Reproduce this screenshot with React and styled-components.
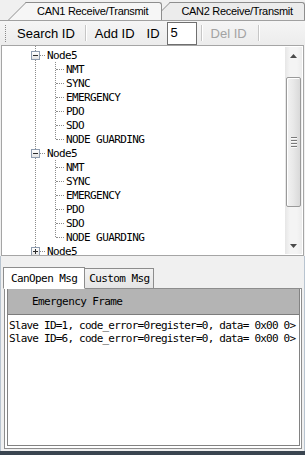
import React from "react";
import styled, { createGlobalStyle, css } from "styled-components";

const GlobalStyle = createGlobalStyle`
  html, body {
    margin: 0;
    padding: 0;
    background: #f0f0f0;
  }
  body {
    font-family: "Liberation Sans", Arial, sans-serif;
  }
`;

const mono = css`
  font-family: "DejaVu Sans Mono", "Liberation Mono", monospace;
  font-size: 11px;
  letter-spacing: -0.6px;
  color: #000;
`;

const Window = styled.div`
  width: 305px;
  height: 455px;
  display: flex;
  flex-direction: column;
  background: #f0f0f0;
  overflow: hidden;
`;

/* ---------- top tab strip ---------- */

const TabStrip = styled.div`
  height: 20px;
  display: flex;
  align-items: flex-end;
  padding-left: 8px;
  border-bottom: 1px solid #a0a0a0;
  background: #f0f0f0;
`;

const StripTab = styled.div`
  position: relative;
  z-index: ${(p) => (p.$active ? 2 : 1)};
  height: 18px;
  display: flex;
  align-items: center;
  padding: 0 0 0 29px;
  width: ${(p) => p.$width}px;
  box-sizing: border-box;
  margin-left: ${(p) => (p.$first ? 0 : -10)}px;
  font-size: 11px;
  letter-spacing: -0.3px;
  color: #000;
  white-space: nowrap;

  &::before {
    content: "";
    position: absolute;
    z-index: -1;
    left: 0;
    bottom: 0;
    width: 24px;
    height: 18px;
    box-sizing: border-box;
    background: ${(p) => (p.$active ? "#f6f6f6" : "#ececec")};
    border-left: 1px solid #8e8e8e;
    border-top: 1px solid #8e8e8e;
    transform: skewX(-45deg);
    transform-origin: bottom left;
  }

  &::after {
    content: "";
    position: absolute;
    z-index: -1;
    left: 18px;
    right: 0;
    top: 0;
    bottom: 0;
    box-sizing: border-box;
    background: ${(p) => (p.$active ? "#f6f6f6" : "#ececec")};
    border-top: 1px solid #8e8e8e;
    border-right: 1px solid #8e8e8e;
    border-top-right-radius: 3px;
  }
`;

/* ---------- toolbar ---------- */

const Toolbar = styled.div`
  height: 24px;
  display: flex;
  align-items: center;
  padding-left: 5px;
  background: linear-gradient(#f5f5f5, #ececec);
  font-size: 13px;
`;

const Grip = styled.div`
  width: 0;
  height: 17px;
  border-left: 1px dotted #8a8a8a;
  margin-right: 10px;
`;

const ToolButton = styled.span`
  color: ${(p) => (p.$disabled ? "#a3a3a3" : "#000")};
  padding: 0 1px;
  margin-right: ${(p) => p.$gap || 0}px;
`;

const Separator = styled.div`
  width: 1px;
  height: 16px;
  background: #c6c6c6;
  border-right: 1px solid #fff;
  margin: 0 ${(p) => p.$right || 7}px 0 ${(p) => p.$left || 9}px;
`;

const IdInput = styled.div`
  width: 30px;
  height: 23px;
  box-sizing: border-box;
  border: 1px solid #6f6f6f;
  background: #fff;
  padding: 2px 0 0 3px;
  font-size: 13px;
  align-self: flex-end;
`;

/* ---------- tree ---------- */

const TreePanel = styled.div`
  height: 211px;
  box-sizing: border-box;
  margin: 0 1px 0 1px;
  border: 1px solid #a5a5a5;
  background: #fff;
  display: flex;
  overflow: hidden;
`;

const TreeArea = styled.div`
  flex: 1;
  position: relative;
  padding-top: 2px;
  overflow: hidden;

  &::before {
    content: "";
    position: absolute;
    left: 33px;
    top: 0;
    bottom: 0;
    border-left: 1px dotted #8c8c8c;
  }
`;

const NodeRow = styled.div`
  height: 14px;
  display: flex;
  align-items: center;
  ${mono};
`;

const Expander = styled.div`
  position: relative;
  z-index: 1;
  width: 7px;
  height: 7px;
  margin-left: 29px;
  border: 1px solid #8f9db0;
  background: linear-gradient(#fff, #e4e4e4);
  display: flex;
  align-items: center;
  justify-content: center;

  &::before {
    content: "";
    width: 5px;
    height: 1px;
    background: #2c2c2c;
  }

  ${(p) =>
    p.$collapsed &&
    css`
      &::after {
        content: "";
        position: absolute;
        width: 1px;
        height: 5px;
        background: #2c2c2c;
      }
    `}
`;

const HLine = styled.span`
  width: ${(p) => p.$w}px;
  height: 0;
  border-top: 1px dotted #8c8c8c;
  margin-right: 2px;
`;

const Children = styled.div`
  position: relative;

  &::before {
    content: "";
    position: absolute;
    left: 53px;
    top: 0;
    bottom: 7px;
    border-left: 1px dotted #8c8c8c;
  }
`;

const ChildRow = styled.div`
  height: 14px;
  display: flex;
  align-items: center;
  padding-left: 54px;
  white-space: pre;
  ${mono};
`;

const ScrollBar = styled.div`
  width: 17px;
  margin: 1px 1px 1px 0;
  display: flex;
  flex-direction: column;
  background: linear-gradient(to right, #e6e6e6, #f4f4f4 30%, #f4f4f4 70%, #ececec);
`;

const ArrowButton = styled.div`
  height: 17px;
  display: flex;
  align-items: center;
  justify-content: center;
`;

const Track = styled.div`
  flex: 1;
  display: flex;
  flex-direction: column;
  padding: 13px 1px 0 1px;
`;

const Thumb = styled.div`
  height: 130px;
  box-sizing: border-box;
  border: 1px solid #9a9a9a;
  border-radius: 2px;
  background: linear-gradient(to right, #f2f2f2, #e8e8e8 50%, #d9d9d9);
  box-shadow: inset 1px 1px 0 #fff;
  display: flex;
  flex-direction: column;
  align-items: center;
  justify-content: center;
  gap: 1px;
`;

const GripLine = styled.div`
  width: 6px;
  height: 1px;
  background: #7a7a7a;
  border-bottom: 1px solid #fafafa;
`;

/* ---------- lower message area ---------- */

const Lower = styled.div`
  flex: 1;
  display: flex;
  flex-direction: column;
  padding: 10px 2px 2px 3px;
  border-left: 1px solid #b8c4d0;
  border-right: 1px solid #b8c4d0;
`;

const MsgTabs = styled.div`
  display: flex;
  align-items: flex-end;
  height: 22px;
  margin-left: -1px;
  position: relative;
  z-index: 1;
`;

const MsgTab = styled.div`
  ${mono};
  box-sizing: border-box;
  height: ${(p) => (p.$active ? 22 : 20)}px;
  padding: 0 ${(p) => (p.$active ? 7 : 4)}px;
  display: flex;
  align-items: center;
  border: 1px solid #8d8d8d;
  border-bottom: ${(p) => (p.$active ? "1px solid #fff" : "none")};
  border-left: ${(p) => (p.$active ? "1px solid #8d8d8d" : "none")};
  background: ${(p) => (p.$active ? "#fff" : "linear-gradient(#f2f2f2, #e5e5e5)")};
  margin-bottom: ${(p) => (p.$active ? -1 : 0)}px;
`;

const TabPage = styled.div`
  flex: 1;
  border: 1px solid #8d8d8d;
  background: #fff;
  display: flex;
  flex-direction: column;
  padding: 0 1px 2px 2px;
`;

const ListView = styled.div`
  flex: 1;
  border: 1px solid #828282;
  border-top: none;
  display: flex;
  flex-direction: column;
`;

const ListHeader = styled.div`
  ${mono};
  height: 25px;
  display: flex;
  align-items: center;
  padding-left: 24px;
  background: #b4b4b4;
  border-bottom: 1px solid #7c7c7c;
`;

const ListBody = styled.div`
  flex: 1;
  padding: 4px 0 0 1px;
  overflow: hidden;
`;

const ListRow = styled.div`
  ${mono};
  height: 13px;
  line-height: 13px;
  white-space: nowrap;
  overflow: hidden;
  letter-spacing: -0.78px;
`;

const BottomEdge = styled.div`
  height: 4px;
  background: #3a4550;
`;

const Arrow = ({ down }) => (
  <svg width="7" height="4" viewBox="0 0 7 4">
    <path d={down ? "M0 0 H7 L3.5 4 Z" : "M0 4 H7 L3.5 0 Z"} fill="#4a4a4a" />
  </svg>
);

const nodeChildren = ["NMT", "SYNC", "EMERGENCY", "PDO", "SDO", "NODE GUARDING"];

const TreeNode = ({ collapsed }) => (
  <div>
    <NodeRow>
      <Expander $collapsed={collapsed} />
      <HLine $w={5} />
      Node5
    </NodeRow>
    {!collapsed && (
      <Children>
        {nodeChildren.map((c) => (
          <ChildRow key={c}>
            <HLine $w={8} />
            {c}
          </ChildRow>
        ))}
      </Children>
    )}
  </div>
);

const rows = [
  "Slave ID=1, code_error=0register=0, data= 0x00 0>",
  "Slave ID=6, code_error=0register=0, data= 0x00 0>",
];

export default function App() {
  return (
    <>
      <GlobalStyle />
      <Window>
        <TabStrip>
          <StripTab $first $active $width={162}>
            CAN1 Receive/Transmit
          </StripTab>
          <StripTab $width={160}>CAN2 Receive/Transmit</StripTab>
        </TabStrip>

        <Toolbar>
          <Grip />
          <ToolButton>Search ID</ToolButton>
          <Separator />
          <ToolButton $gap={10}>Add ID</ToolButton>
          <ToolButton $gap={6}>ID</ToolButton>
          <IdInput>5</IdInput>
          <Separator $left={4} $right={7} />
          <ToolButton $disabled>Del ID</ToolButton>
          <Separator $left={10} />
        </Toolbar>

        <TreePanel>
          <TreeArea>
            <TreeNode />
            <TreeNode />
            <TreeNode collapsed />
          </TreeArea>
          <ScrollBar>
            <ArrowButton>
              <Arrow />
            </ArrowButton>
            <Track>
              <Thumb>
                <GripLine />
                <GripLine />
                <GripLine />
                <GripLine />
              </Thumb>
            </Track>
            <ArrowButton>
              <Arrow down />
            </ArrowButton>
          </ScrollBar>
        </TreePanel>

        <Lower>
          <MsgTabs>
            <MsgTab $active>CanOpen Msg</MsgTab>
            <MsgTab>Custom Msg</MsgTab>
          </MsgTabs>
          <TabPage>
            <ListView>
              <ListHeader>Emergency Frame</ListHeader>
              <ListBody>
                {rows.map((r) => (
                  <ListRow key={r}>{r}</ListRow>
                ))}
              </ListBody>
            </ListView>
          </TabPage>
        </Lower>
        <BottomEdge />
      </Window>
    </>
  );
}
